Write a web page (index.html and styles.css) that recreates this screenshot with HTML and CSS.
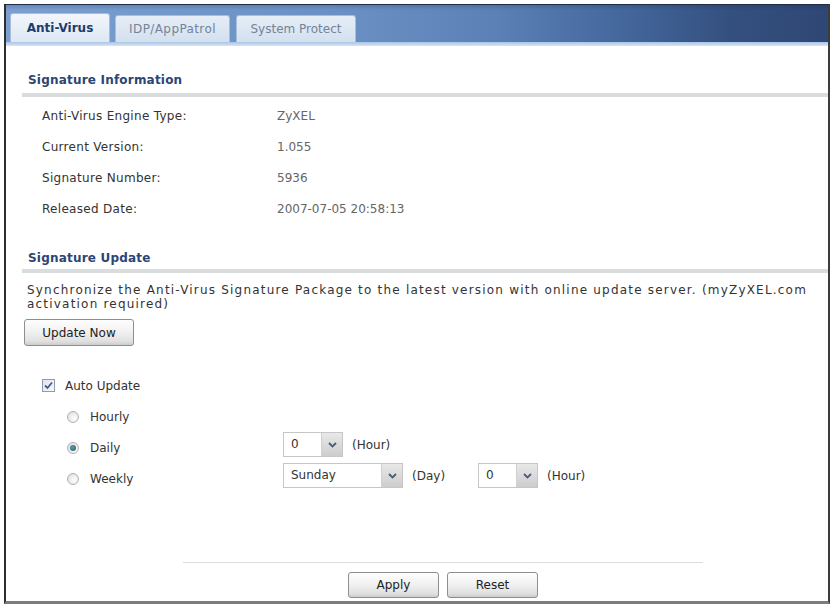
FILE: index.html
```html
<!DOCTYPE html>
<html>
<head>
<meta charset="utf-8">
<link rel="stylesheet" href="styles.css">
</head>
<body>
<div class="frame">
  <div class="tabbar">
    <div class="tab active">Anti-Virus</div>
    <div class="tab t2">IDP/AppPatrol</div>
    <div class="tab t3">System Protect</div>
  </div>
  <div class="tabline"></div>
  <div class="content">
    <div class="sec-title first">Signature Information</div>
    <div class="info">
      <div class="row"><span class="lbl">Anti-Virus Engine Type:</span><span class="val">ZyXEL</span></div>
      <div class="row"><span class="lbl">Current Version:</span><span class="val">1.055</span></div>
      <div class="row"><span class="lbl">Signature Number:</span><span class="val">5936</span></div>
      <div class="row"><span class="lbl">Released Date:</span><span class="val">2007-07-05 20:58:13</span></div>
    </div>
    <div class="sec-title second">Signature Update</div>
    <p class="desc">Synchronize the Anti-Virus Signature Package to the latest version with online update server. (myZyXEL.com activation required)</p>
    <button class="btn update">Update Now</button>
    <div class="opts">
      <div class="opt">
        <span class="cbox"><svg width="11" height="11" viewBox="0 0 11 11"><path d="M2 5.5 L4.5 8 L9 2.5" fill="none" stroke="#3d5d8c" stroke-width="1.8"/></svg></span>
        <span class="clbl">Auto Update</span>
      </div>
      <div class="opt">
        <span class="rad"></span><span class="rlbl">Hourly</span>
      </div>
      <div class="opt">
        <span class="rad on"></span><span class="rlbl">Daily</span>
        <span class="sel w60"><span class="sv">0</span><span class="sarr"><svg width="9" height="6" viewBox="0 0 9 6"><path d="M1 1 L4.5 4.5 L8 1" fill="none" stroke="#4b5c78" stroke-width="1.8"/></svg></span></span>
        <span class="unit">(Hour)</span>
      </div>
      <div class="opt">
        <span class="rad"></span><span class="rlbl">Weekly</span>
        <span class="sel w120"><span class="sv">Sunday</span><span class="sarr"><svg width="9" height="6" viewBox="0 0 9 6"><path d="M1 1 L4.5 4.5 L8 1" fill="none" stroke="#4b5c78" stroke-width="1.8"/></svg></span></span>
        <span class="unit day">(Day)</span>
        <span class="sel w60"><span class="sv">0</span><span class="sarr"><svg width="9" height="6" viewBox="0 0 9 6"><path d="M1 1 L4.5 4.5 L8 1" fill="none" stroke="#4b5c78" stroke-width="1.8"/></svg></span></span>
        <span class="unit">(Hour)</span>
      </div>
    </div>
  </div>
  <div class="footer">
    <div class="foot-inner">
      <button class="btn act">Apply</button>
      <button class="btn act">Reset</button>
    </div>
  </div>
</div>
</body>
</html>
```
FILE: styles.css
```css
html, body {
  margin: 0;
  padding: 0;
  background: #ffffff;
}
body {
  font-family: "DejaVu Sans", Verdana, sans-serif;
  font-size: 12px;
  color: #333;
}
.frame {
  margin: 4px 2px 0 4px;
  height: 600px;
  box-sizing: border-box;
  border-top: 1px solid #1f2d48;
  border-left: 2px solid #2e2e2e;
  border-right: 2px solid #3c3c3c;
  border-bottom: 3px solid #7c7c7c;
  display: flex;
  flex-direction: column;
}
.tabbar {
  height: 37px;
  flex: none;
  display: flex;
  align-items: flex-end;
  padding-left: 4px;
  background:
    linear-gradient(to bottom, rgba(20,30,60,0.18) 0, rgba(255,255,255,0) 5px, rgba(255,255,255,0) 100%),
    linear-gradient(to right, #7a9fd0 0%, #6b91c4 40%, #5a80b6 60%, #44679c 75%, #34507f 88%, #2f4774 100%);
}
.tab {
  box-sizing: border-box;
  height: 27px;
  margin-right: 5px;
  border: 1px solid #a8bdd8;
  border-bottom: none;
  border-radius: 3px 3px 0 0;
  background: linear-gradient(to bottom, #e6eef7, #d3e0ee);
  color: #73839a;
  font-size: 12px;
  line-height: 26px;
  text-align: center;
}
.tab.active {
  width: 100px;
  height: 29px;
  background: linear-gradient(to bottom, #f2f6fb, #dde8f3);
  color: #203c6a;
  font-weight: bold;
  line-height: 29px;
}
.tab.t2 { width: 115px; letter-spacing: 0.4px; }
.tab.t3 { width: 120px; margin-left: 1px; }
.tabline {
  height: 4px;
  flex: none;
  background: linear-gradient(to bottom, #a9c4e6, #d7e5f4);
}
.content {
  flex: 1;
}
.sec-title {
  margin-left: 16px;
  padding-left: 6px;
  height: 20px;
  line-height: 20px;
  font-weight: bold;
  font-size: 12px;
  letter-spacing: 0.2px;
  color: #2b4675;
  border-bottom: 4px solid #d9dddd;
}
.sec-title.first {
  margin-top: 24px;
  padding-bottom: 3px;
}
.sec-title.second {
  margin-top: 24px;
  padding-bottom: 1px;
}
.info {
  margin-top: 3px;
}
.row {
  height: 31px;
  display: flex;
  align-items: center;
  padding-left: 36px;
}
.lbl {
  width: 235px;
  color: #333;
  letter-spacing: 0.3px;
}
.val {
  color: #666;
}
.desc {
  margin: 10px 14px 0 21px;
  line-height: 14px;
  font-size: 12px;
  color: #333;
  letter-spacing: 1.2px;
}
.btn {
  box-sizing: border-box;
  border: 1px solid #8e8e8e;
  border-radius: 3px;
  background: linear-gradient(to bottom, #fefefe 0%, #f0f0f0 50%, #e0e0e0 85%, #cdcdcd 100%);
  font-family: "DejaVu Sans", Verdana, sans-serif;
  font-size: 12px;
  color: #222;
  padding: 0;
}
.btn.update {
  display: block;
  margin: 8px 0 0 18px;
  width: 110px;
  height: 27px;
}
.opts {
  margin-top: 24px;
}
.opt {
  height: 31px;
  display: flex;
  align-items: center;
}
.cbox {
  box-sizing: border-box;
  width: 13px;
  height: 13px;
  margin-left: 36px;
  border: 1px solid #8d9cb4;
  background: linear-gradient(to bottom right, #dfe3ea, #f8f8f8);
  display: flex;
  align-items: center;
  justify-content: center;
}
.cbox svg { display: block; }
.clbl {
  margin-left: 10px;
  color: #333;
}
.rad {
  box-sizing: border-box;
  width: 12px;
  height: 12px;
  margin-left: 61px;
  border-radius: 50%;
  border: 1px solid #b4b4b4;
  background: radial-gradient(circle at 60% 60%, #ffffff 0, #eeeeee 45%, #d2d2d2 100%);
  display: flex;
  align-items: center;
  justify-content: center;
}
.rad.on::after {
  content: "";
  width: 6px;
  height: 6px;
  border-radius: 50%;
  background: radial-gradient(circle at 40% 40%, #5d98a8, #235a6c);
}
.rlbl {
  margin-left: 11px;
  width: 193px;
  color: #333;
}
.sel {
  box-sizing: border-box;
  height: 25px;
  margin-top: -6px;
  border: 1px solid #c6c6c6;
  background: #fff;
  display: flex;
  align-items: stretch;
}
.sel.w60 { width: 60px; }
.sel.w120 { width: 120px; }
.sv {
  flex: 1;
  padding-left: 7px;
  line-height: 23px;
  color: #333;
}
.sarr {
  width: 20px;
  background: linear-gradient(to bottom, #e8e8e8, #cdcdcd);
  border-left: 1px solid #d0d0d0;
  display: flex;
  align-items: center;
  justify-content: center;
}
.sarr svg { display: block; }
.unit {
  margin-left: 9px;
  margin-top: -6px;
  color: #333;
}
.unit.day {
  width: 66px;
}
.footer {
  flex: none;
  padding-bottom: 3px;
}
.foot-inner {
  margin-left: 177px;
  width: 520px;
  border-top: 1px solid #dedede;
  padding-top: 9px;
  display: flex;
  justify-content: center;
  gap: 8px;
}
.btn.act {
  width: 91px;
  height: 26px;
}
```
